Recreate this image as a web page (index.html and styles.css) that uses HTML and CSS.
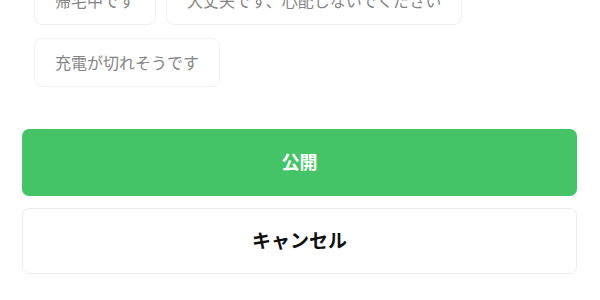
FILE: index.html
```html
<!DOCTYPE html>
<html lang="ja">
<head>
<meta charset="utf-8">
<link rel="stylesheet" href="styles.css">
</head>
<body>
<div class="page">
  <div class="chips">
    <div class="chip">帰宅中です</div>
    <div class="chip">大丈夫です、心配しないでください</div>
    <div class="chip">充電が切れそうです</div>
  </div>
  <div class="actions">
    <button class="btn btn-primary">公開</button>
    <button class="btn btn-secondary">キャンセル</button>
  </div>
</div>
</body>
</html>
```

FILE: styles.css
```css
html, body {
  margin: 0;
  padding: 0;
  background: #ffffff;
}
body {
  font-family: "Noto Sans CJK JP", "Noto Sans", sans-serif;
  overflow: hidden;
}
.page {
  width: 555px;
  padding: 0 23px 0 22px;
}
.chips {
  display: flex;
  flex-wrap: wrap;
  gap: 13px 10px;
  padding: 0 12px;
  margin-top: -24px;
}
.chip {
  box-sizing: border-box;
  height: 49px;
  display: flex;
  align-items: center;
  padding: 0 20px 1px;
  border: 1px solid #f0f0f0;
  border-radius: 8px;
  color: #858585;
  font-size: 16px;
  background: #fff;
}
.actions {
  margin-top: 42px;
  display: flex;
  flex-direction: column;
  gap: 12px;
}
.btn {
  box-sizing: border-box;
  width: 100%;
  font-family: inherit;
  font-weight: bold;
  font-size: 18px;
  border-radius: 7px;
  cursor: pointer;
  display: flex;
  align-items: center;
  justify-content: center;
  padding: 0 0 3px;
}
.btn-primary {
  height: 67px;
  background: #45c467;
  border: none;
  color: #ffffff;
}
.btn-secondary {
  height: 66px;
  background: #ffffff;
  border: 1px solid #ececec;
  color: #111111;
  font-size: 19px;
}
```
